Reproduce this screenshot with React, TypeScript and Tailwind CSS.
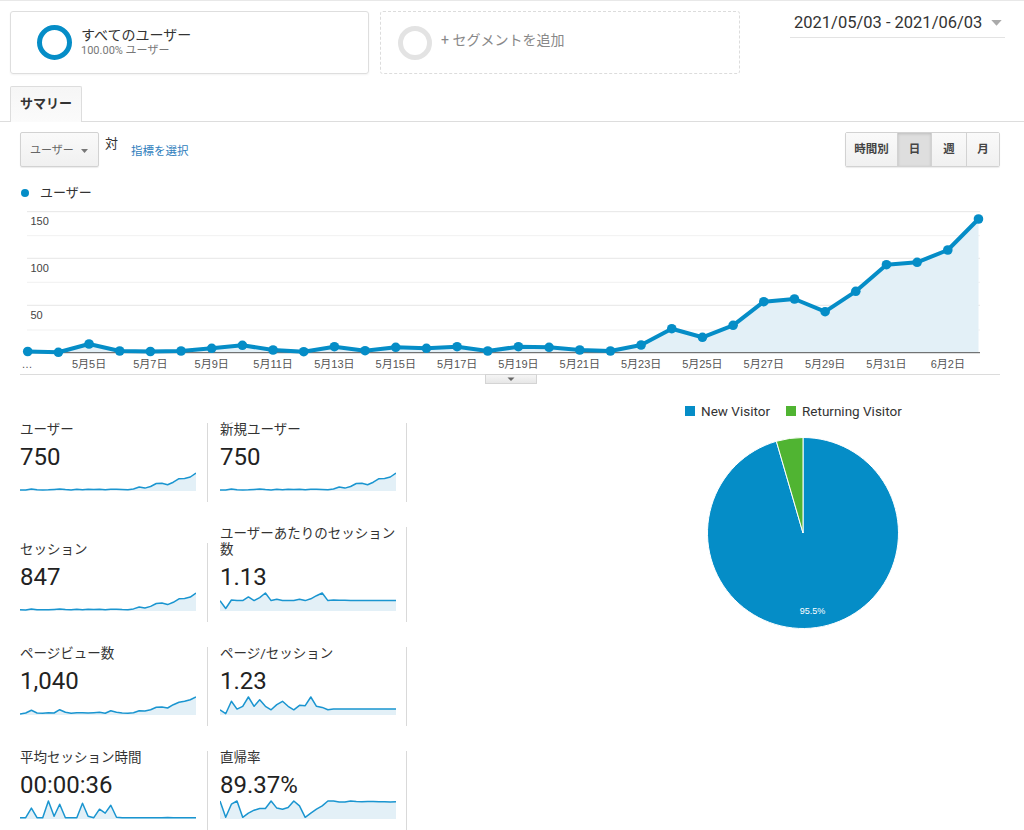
import React from 'react';

const BLUE = '#058dc7';
const GREEN = '#50b432';
const AXIS_FONT = "'Liberation Sans','Noto Sans CJK JP',sans-serif";

// page-y of every daily point (5/3 .. 6/3)
const mainY = [
  351.5, 352.3, 344, 351, 351.5, 351, 348.3, 345.3, 350, 351.7, 346.7, 350.7, 347.3, 348.3, 346.7, 351,
  346.7, 347.3, 350, 351, 345, 328.7, 337.3, 325.3, 301.7, 299, 311.7, 291.3, 264.7, 262.3, 250, 219,
];

const userVals = [1, 0, 9, 2, 1, 2, 5, 8, 3, 1, 6, 2, 6, 5, 6, 2, 6, 6, 3, 2, 8, 25, 16, 29, 54, 57, 44, 65, 94, 96, 109, 142];
const sessionVals = [2, 1, 10, 3, 2, 3, 6, 9, 4, 2, 7, 3, 7, 6, 7, 3, 7, 7, 4, 3, 10, 28, 19, 33, 60, 64, 50, 72, 104, 106, 120, 158];
const norm = (a: number[]) => {
  const m = Math.max(...a);
  return a.map((v) => v / m);
};

const pvY = [313, 310, 302, 310, 311, 309, 310, 300, 308, 311, 309, 309, 310, 309, 308, 311, 303, 308, 310, 311, 309, 303, 304, 300, 293, 292, 295, 285, 278, 275, 270, 262];

const perUser = [0.54, 0.09, 0.59, 0.55, 0.55, 0.77, 0.55, 0.73, 1, 0.55, 0.63, 0.55, 0.55, 0.55, 0.63, 0.55, 0.66, 0.84, 1, 0.55, 0.58, 0.57, 0.57, 0.55, 0.56, 0.56, 0.56, 0.56, 0.56, 0.56, 0.56, 0.56];
const perSession = [0.25, 0.02, 0.75, 0.29, 0.45, 1, 0.45, 0.84, 0.45, 0.25, 0.55, 0.75, 0.45, 0.25, 0.51, 0.49, 1, 0.45, 0.39, 0.25, 0.29, 0.29, 0.29, 0.3, 0.3, 0.29, 0.29, 0.29, 0.29, 0.3, 0.3, 0.3];
const avgTime = [0.02, 0.02, 0.58, 0.02, 0.02, 1, 0.1, 0.81, 0.02, 0.02, 0.02, 0.87, 0.1, 0.02, 0.52, 0.29, 0.75, 0.04, 0.02, 0.02, 0.02, 0.02, 0.02, 0.02, 0.02, 0.02, 0.03, 0.02, 0.02, 0.02, 0.02, 0.02];
const bounce = [1, 0.04, 0.81, 1, 0.04, 0.29, 0.46, 0.56, 0.56, 1, 0.58, 0.52, 0.62, 1, 0.71, 0.04, 0.29, 0.52, 0.71, 1, 1, 0.94, 0.94, 1, 0.97, 0.96, 0.97, 0.97, 0.96, 0.96, 0.95, 0.96];

const Triangle = ({ color = '#666', w = 8 }: { color?: string; w?: number }) => (
  <svg width={w} height={w / 2 + 1} viewBox="0 0 8 5">
    <polygon points="0,0 8,0 4,4.5" fill={color} />
  </svg>
);

function MainChart() {
  const x = (i: number) => 27.7 + i * 30.67;
  const pts = mainY.map((y, i) => [x(i), y - 200]);
  const line = pts.map((p, i) => `${i ? 'L' : 'M'}${p[0].toFixed(1)},${p[1].toFixed(1)}`).join(' ');
  const area = `${line} L${pts[31][0].toFixed(1)},152.7 L${pts[0][0].toFixed(1)},152.7 Z`;
  const labels: { i: number; t: string }[] = [];
  for (let i = 2; i <= 30; i += 2) {
    const d = i + 3;
    labels.push({ i, t: d <= 31 ? `5月${d}日` : `6月${d - 31}日` });
  }
  return (
    <svg width={1024} height={190} viewBox="0 0 1024 190" className="block">
      {[35.7, 82.3, 130].map((y) => (
        <line key={y} x1={27} x2={980} y1={y} y2={y} stroke="#f1f1f1" strokeWidth={1} />
      ))}
      {[11.7, 58.3, 105.3].map((y) => (
        <line key={y} x1={27} x2={980} y1={y} y2={y} stroke="#e6e6e6" strokeWidth={1} />
      ))}
      <g fontFamily={AXIS_FONT} fontSize={11} fill="#444">
        <text x={30.5} y={24.7}>150</text>
        <text x={30.5} y={71.6}>100</text>
        <text x={30.5} y={118.8}>50</text>
      </g>
      <path d={area} fill="#e3f0f7" />
      <line x1={27} x2={980} y1={152.7} y2={152.7} stroke="#555" strokeWidth={1} />
      <path d={line} fill="none" stroke={BLUE} strokeWidth={4} strokeLinejoin="round" />
      {pts.map((p, i) => (
        <circle key={i} cx={p[0]} cy={p[1]} r={4.8} fill={BLUE} />
      ))}
      <g fontFamily={AXIS_FONT} fontSize={11} fill="#555" textAnchor="middle">
        <text x={27} y={168}>…</text>
        {labels.map((l) => (
          <text key={l.i} x={x(l.i)} y={168}>
            {l.t}
          </text>
        ))}
      </g>
      <line x1={20} x2={1000} y1={174.5} y2={174.5} stroke="#dcdcdc" strokeWidth={1} />
      <defs>
        <linearGradient id="tabg" x1="0" y1="0" x2="0" y2="1">
          <stop offset="0" stopColor="#f6f6f6" />
          <stop offset="1" stopColor="#e6e6e6" />
        </linearGradient>
      </defs>
      <rect x={485.5} y={174.5} width={51} height={9} fill="url(#tabg)" stroke="#d4d4d4" strokeWidth={1} />
      <polygon points="507.5,177.5 514.5,177.5 511,181" fill="#666" />
    </svg>
  );
}

function Spark({ data }: { data: number[] }) {
  const w = 176;
  const h = 20;
  const pts = data.map((v, i) => [(i * w) / (data.length - 1), h - 1 - v * 17]);
  const line = pts.map((p, i) => `${i ? 'L' : 'M'}${p[0].toFixed(1)},${p[1].toFixed(1)}`).join(' ');
  return (
    <svg width={w} height={h} viewBox={`0 0 ${w} ${h}`} className="block">
      <path d={`${line} L${w},${h} L0,${h} Z`} fill="#e3f0f7" />
      <path d={line} fill="none" stroke="#1a95d0" strokeWidth={1.5} strokeLinejoin="round" />
    </svg>
  );
}

function Metric({ label, value, data, first }: { label: string; value: string; data: number[]; first?: boolean }) {
  return (
    <div className={`border-r border-[#d9d9d9] ${first ? 'w-[188px] pr-[10px]' : 'w-[199px] pl-[12px] pr-[10px]'} pb-[11px]`}>
      <div className="-mt-[2px] text-[13.5px] leading-4 text-[#333]">{label}</div>
      <div className="mt-[6px] text-[24px] leading-[28px] text-[#222]">{value}</div>
      <Spark data={data} />
    </div>
  );
}

function Pie() {
  const c = 96;
  const r = 95.5;
  const a = ((-90 - 0.045 * 360) * Math.PI) / 180;
  const ex = c + r * Math.cos(a);
  const ey = c + r * Math.sin(a);
  return (
    <svg width={192} height={192} viewBox="0 0 192 192" className="block">
      <path d={`M${c},${c} L${c},${c - r} A${r},${r} 0 1 1 ${ex.toFixed(2)},${ey.toFixed(2)} Z`} fill={BLUE} stroke="#fff" strokeWidth={1} />
      <path d={`M${c},${c} L${ex.toFixed(2)},${ey.toFixed(2)} A${r},${r} 0 0 1 ${c},${c - r} Z`} fill={GREEN} stroke="#fff" strokeWidth={1} />
      <text x={105.5} y={176.5} textAnchor="middle" fontSize={9} fill="#fff" fontFamily={AXIS_FONT}>
        95.5%
      </text>
    </svg>
  );
}

export default function App() {
  const users = norm(userVals);
  const sessions = norm(sessionVals);
  const pageviews = pvY.map((y) => (313 - y) / 51);

  return (
    <div className="w-[1024px] h-[830px] overflow-hidden bg-white border-t border-[#e8e8e8] font-['Roboto','Noto_Sans_CJK_JP',sans-serif] text-[#333]">
      {/* Segments */}
      <div className="flex items-start pl-[10px] pt-[10px]">
        <div className="w-[359px] h-[63px] flex items-center pl-[26px] border border-[#dedede] rounded-[3px] shadow-[0_1px_2px_rgba(0,0,0,0.05)]">
          <div className="w-[35px] h-[35px] rounded-full border-[5px] border-[#058dc7]" />
          <div className="ml-[9px] -mt-[2px]">
            <div className="text-[14px] leading-[18px] text-[#333]">すべてのユーザー</div>
            <div className="text-[11px] leading-[14px] text-[#777]">100.00% ユーザー</div>
          </div>
        </div>
        <div className="ml-[11px] w-[360px] h-[63px] flex items-center pl-[17px] border border-dashed border-[#dcdcdc] rounded-[3px]">
          <div className="w-[34px] h-[34px] rounded-full border-[5px] border-[#e3e3e3]" />
          <div className="ml-[9px] -mt-[5px] text-[14px] leading-[18px] text-[#888]">+ セグメントを追加</div>
        </div>
        <div className="ml-auto mr-[19px] mt-[2px] w-[215px] flex items-center justify-between pl-[4px] pr-[3px] pb-[4px] border-b border-[#e3e3e3]">
          <span className="text-[16.5px] leading-[20px] text-[#333]">2021/05/03 - 2021/06/03</span>
          <Triangle color="#aaa" w={11} />
        </div>
      </div>

      {/* Tab */}
      <div className="mt-[12px] h-[36px] pl-[10px] border-b border-[#dddddd]">
        <div className="w-[72px] h-[36px] border border-b-0 border-[#dddddd] rounded-t-[2px] bg-linear-to-b from-[#f6f6f6] to-[#fbfbfb] pl-[9px] text-[13px] font-bold leading-[33px] text-[#333]">
          サマリー
        </div>
      </div>

      {/* Controls */}
      <div className="mt-[10px] h-[35px] flex items-start pl-[20px] pr-[24px]">
        <div className="w-[79px] h-[35px] flex items-center pl-[9px] pr-[10px] pt-[3px] border border-[#d2d2d2] rounded-[2px] bg-linear-to-b from-[#fafafa] to-[#f0f0f0] shadow-[0_1px_1px_rgba(0,0,0,0.08)]">
          <span className="text-[11px] text-[#666]">ユーザー</span>
          <span className="ml-auto">
            <Triangle color="#777" w={7} />
          </span>
        </div>
        <span className="ml-[6px] mt-[4px] text-[13px] leading-4 text-[#333]">対</span>
        <span className="ml-[13px] mt-[11px] text-[11.5px] leading-4 text-[#2f7ebd]">指標を選択</span>
        <div className="ml-auto flex h-[35px] border border-[#d2d2d2] rounded-[2px] shadow-[0_1px_1px_rgba(0,0,0,0.08)] text-[11.5px] font-bold text-[#444]">
          <div className="w-[51px] flex items-center justify-center bg-linear-to-b from-[#fafafa] to-[#f0f0f0]">時間別</div>
          <div className="w-[34px] flex items-center justify-center border-l border-[#d2d2d2] bg-[#dedede] shadow-[inset_0_1px_3px_rgba(0,0,0,0.15)]">日</div>
          <div className="w-[35px] flex items-center justify-center border-l border-[#d2d2d2] bg-linear-to-b from-[#fafafa] to-[#f0f0f0]">週</div>
          <div className="w-[33px] flex items-center justify-center border-l border-[#d2d2d2] bg-linear-to-b from-[#fafafa] to-[#f0f0f0]">月</div>
        </div>
      </div>

      {/* Legend */}
      <div className="mt-[18px] h-[15px] flex items-center pl-[21px]">
        <span className="w-[8px] h-[8px] rounded-full bg-[#058dc7]" />
        <span className="ml-[11px] text-[13px] leading-[15px] text-[#333]">ユーザー</span>
      </div>

      <MainChart />

      {/* Lower section */}
      <div className="flex items-start">
        <div className="pl-[20px] pt-[33px] flex flex-col gap-[25px]">
          <div className="flex items-end">
            <Metric first label="ユーザー" value="750" data={users} />
            <Metric label="新規ユーザー" value="750" data={users} />
          </div>
          <div className="flex items-end">
            <Metric first label="セッション" value="847" data={sessions} />
            <Metric label="ユーザーあたりのセッション数" value="1.13" data={perUser} />
          </div>
          <div className="flex items-end">
            <Metric first label="ページビュー数" value="1,040" data={pageviews} />
            <Metric label="ページ/セッション" value="1.23" data={perSession} />
          </div>
          <div className="flex items-end">
            <Metric first label="平均セッション時間" value="00:00:36" data={avgTime} />
            <Metric label="直帰率" value="89.37%" data={bounce} />
          </div>
        </div>

        <div className="ml-[278px] pt-[13px]">
          <div className="flex items-center h-4 text-[13.5px] text-[#333]">
            <span className="w-[10px] h-[10px] bg-[#058dc7]" />
            <span className="ml-[6px]">New Visitor</span>
            <span className="ml-[16px] w-[10px] h-[10px] bg-[#50b432]" />
            <span className="ml-[6px]">Returning Visitor</span>
          </div>
          <div className="mt-[18px] ml-[22px]">
            <Pie />
          </div>
        </div>
      </div>
    </div>
  );
}
